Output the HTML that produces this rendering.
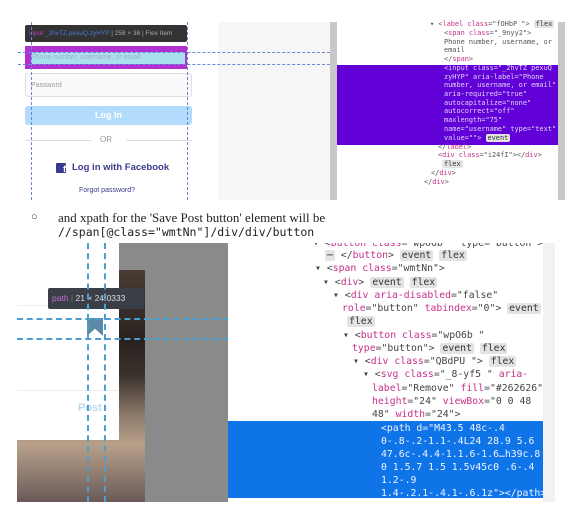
<html><head><style>
body{margin:0;width:576px;height:506px;background:#fff;position:relative;overflow:hidden;font-family:"Liberation Sans",sans-serif}
.a{position:absolute}
.m{font-family:"DejaVu Sans Mono","Liberation Mono",monospace;white-space:pre}
.t div{position:absolute;font-size:6.9px;line-height:8.7px;color:#555;white-space:pre}
.b div{position:absolute;font-size:9.8px;line-height:13.2px;color:#444;white-space:pre}
.tg{color:#c8308c}
.pill{background:#e3e3e3;border-radius:2px;padding:0 2px;color:#333}
.dh{border-top:1px dashed #6a86d8;height:0}
.dv{border-left:1px dashed #6a86d8;width:0}
.bh{border-top:2px dashed #4a9fd0;height:0}
.bv{border-left:2px dashed #4a9fd0;width:0}
.t div.w{color:#e0d4fa}.b div.wb{color:#eef4ff}
</style></head><body>
<!-- top screenshot -->
<div class="a" style="left:218px;top:22px;width:112px;height:178px;background:#f6f6f6"></div>
<div class="a" style="left:330px;top:22px;width:7px;height:178px;background:#c8c8c8"></div>
<div class="a" style="left:558px;top:22px;width:7px;height:178px;background:#c8c8c8"></div>
<div class="a" style="left:25px;top:25px;width:162px;height:17px;background:#333;border-radius:2px;font-size:6.5px;line-height:17px;color:#aaa;padding-left:4px;box-sizing:border-box"><span style="color:#c040c0">input</span><span style="color:#4a7ad8">._2hvTZ.pexuQ.zyHYP</span> | 258 × 36 | Flex Item</div>
<div class="a" style="left:25px;top:46px;width:162px;height:23px;background:#b030d0"></div>
<div class="a" style="left:31px;top:52px;width:154px;height:12px;background:#a8e0ee;font-size:7px;line-height:12px;color:#aac">Phone number, username, or email</div>
<div class="a" style="left:25px;top:73px;width:167px;height:24px;border:1px solid #e0e0e0;background:#fafafa;border-radius:3px;font-size:7px;line-height:24px;color:#999;padding-left:5px;box-sizing:border-box">Password</div>
<div class="a" style="left:25px;top:106px;width:167px;height:19px;background:#b3dbfc;border-radius:3px;font-size:9px;font-weight:bold;color:#fff;text-align:center;line-height:19px">Log In</div>
<div class="a" style="left:25px;top:140px;width:67px;height:1px;background:#ddd"></div>
<div class="a" style="left:126px;top:140px;width:66px;height:1px;background:#ddd"></div>
<div class="a" style="left:100px;top:135px;font-size:8px;color:#999">OR</div>
<div class="a" style="left:56px;top:163px;width:10px;height:10px;background:#3b3a8f;border-radius:1px;color:#fff;font-size:9px;font-weight:bold;line-height:12px;text-align:right;overflow:hidden">f</div>
<div class="a" style="left:72px;top:162px;font-size:9.5px;font-weight:bold;color:#3b3a8f">Log in with Facebook</div>
<div class="a" style="left:79px;top:187px;font-size:7px;color:#3b3a8f">Forgot password?</div>
<div class="a dh" style="left:18px;top:52px;width:312px"></div>
<div class="a dh" style="left:18px;top:64px;width:312px"></div>
<div class="a dv" style="left:31px;top:22px;height:178px"></div>
<div class="a dv" style="left:187px;top:22px;height:178px"></div>
<div class="a" style="left:337px;top:65px;width:221px;height:80px;background:#6200d8"></div>
<div class="a m t" style="left:0;top:0">
<div style="left:430px;top:20px">▾ &lt;<span class="tg">label</span> <span class="tg">class</span>="fOHbP "&gt; <span class="pill">flex</span></div>
<div style="left:444px;top:29px">&lt;<span class="tg">span</span> <span class="tg">class</span>="_9nyy2"&gt;</div>
<div style="left:444px;top:38px">Phone number, username, or</div>
<div style="left:444px;top:46px">email</div>
<div style="left:444px;top:55px">&lt;/<span class="tg">span</span>&gt;</div>
<div class="w" style="left:444px;top:64px">&lt;input class="_2hvTZ pexuQ</div>
<div class="w" style="left:444px;top:73px">zyHYP" aria-label="Phone</div>
<div class="w" style="left:444px;top:81px">number, username, or email"</div>
<div class="w" style="left:444px;top:90px">aria-required="true"</div>
<div class="w" style="left:444px;top:99px">autocapitalize="none"</div>
<div class="w" style="left:444px;top:107px">autocorrect="off"</div>
<div class="w" style="left:444px;top:116px">maxlength="75"</div>
<div class="w" style="left:444px;top:125px">name="username" type="text"</div>
<div class="w" style="left:444px;top:134px">value=""&gt; <span class="pill">event</span></div>
<div style="left:438px;top:143px">&lt;/<span class="tg">label</span>&gt;</div>
<div style="left:438px;top:151px">&lt;<span class="tg">div</span> <span class="tg">class</span>="i24fI"&gt;&lt;/<span class="tg">div</span>&gt;</div>
<div style="left:442px;top:160px"><span class="pill">flex</span></div>
<div style="left:431px;top:169px">&lt;/<span class="tg">div</span>&gt;</div>
<div style="left:424px;top:178px">&lt;/<span class="tg">div</span>&gt;</div>
</div>
<!-- middle text -->
<div class="a" style="left:31px;top:211px;font-size:11px;color:#333">○</div>
<div class="a" style="left:58px;top:210px;font-family:'Liberation Serif',serif;font-size:13px;color:#222">and xpath for the 'Save Post button' element will be</div>
<div class="a m" style="left:58px;top:225px;font-size:11.5px;color:#222">//span[@class="wmtNn"]/div/div/button</div>
<!-- bottom screenshot -->
<div class="a" style="left:119px;top:243px;width:109px;height:259px;background:#8a8a8a"></div>
<div class="a" style="left:17px;top:270px;width:128px;height:232px;background:linear-gradient(#4a3c34,#2a2220 30%,#3a302c 45%,#8a7868 62%,#b8a08a 75%,#6a5a58)"></div>
<div class="a" style="left:17px;top:243px;width:102px;height:197px;background:#fff"></div>
<div class="a" style="left:17px;top:305px;width:102px;height:1px;background:#eee"></div>
<div class="a" style="left:17px;top:390px;width:102px;height:1px;background:#eee"></div>
<div class="a" style="left:78px;top:402px;font-size:11px;color:#b8dcf4;font-weight:bold">Post</div>
<div class="a" style="left:48px;top:288px;width:96px;height:21px;background:#3a3f47;border-radius:2px;font-size:8.5px;line-height:21px;color:#ddd;padding-left:4px;box-sizing:border-box"><span style="color:#c070d0">path</span> <span style="color:#777">|</span> 21 × 24.0333</div>
<div class="a" style="left:87px;top:318px;width:16px;height:18px;background:#5a8aa8;clip-path:polygon(0 0,100% 0,100% 100%,50% 60%,0 100%)"></div>
<div class="a bh" style="left:17px;top:318px;width:211px"></div>
<div class="a bh" style="left:17px;top:338px;width:211px"></div>
<div class="a bv" style="left:87px;top:243px;height:259px"></div>
<div class="a bv" style="left:104px;top:243px;height:259px"></div>
<div class="a" style="left:228px;top:421px;width:315px;height:77px;background:#0f74e8"></div>
<div class="a" style="left:543px;top:243px;width:12px;height:259px;background:#f2f2f2"></div>
<div class="a" style="left:300px;top:243px;width:243px;height:259px;overflow:hidden">
<div class="a m b" style="left:-300px;top:-243px">
<div style="left:313px;top:237px">▾ &lt;<span class="tg">button</span> <span class="tg">class</span>="wpO6b " type="button"&gt;</div>
<div style="left:325px;top:249px"><span class="pill">⋯</span> &lt;/<span class="tg">button</span>&gt; <span class="pill">event</span> <span class="pill">flex</span></div>
<div style="left:315px;top:262px">▾ &lt;<span class="tg">span</span> <span class="tg">class</span>="wmtNn"&gt;</div>
<div style="left:323px;top:276px">▾ &lt;<span class="tg">div</span>&gt; <span class="pill">event</span> <span class="pill">flex</span></div>
<div style="left:333px;top:289px">▾ &lt;<span class="tg">div</span> <span class="tg">aria-disabled</span>="false"</div>
<div style="left:342px;top:302px"><span class="tg">role</span>="button" <span class="tg">tabindex</span>="0"&gt; <span class="pill">event</span></div>
<div style="left:347px;top:315px"><span class="pill">flex</span></div>
<div style="left:343px;top:329px">▾ &lt;<span class="tg">button</span> <span class="tg">class</span>="wpO6b "</div>
<div style="left:352px;top:342px"><span class="tg">type</span>="button"&gt; <span class="pill">event</span> <span class="pill">flex</span></div>
<div style="left:353px;top:355px">▾ &lt;<span class="tg">div</span> <span class="tg">class</span>="QBdPU "&gt; <span class="pill">flex</span></div>
<div style="left:363px;top:368px">▾ &lt;<span class="tg">svg</span> <span class="tg">class</span>="_8-yf5 " <span class="tg">aria-</span></div>
<div style="left:372px;top:382px"><span class="tg">label</span>="Remove" <span class="tg">fill</span>="#262626"</div>
<div style="left:372px;top:395px"><span class="tg">height</span>="24" <span class="tg">viewBox</span>="0 0 48</div>
<div style="left:372px;top:408px">48" <span class="tg">width</span>="24"&gt;</div>
<div class="wb" style="left:381px;top:422px">&lt;path d="M43.5 48c-.4</div>
<div class="wb" style="left:381px;top:435px">0-.8-.2-1.1-.4L24 28.9 5.6</div>
<div class="wb" style="left:381px;top:448px">47.6c-.4.4-1.1.6-1.6…h39c.8</div>
<div class="wb" style="left:381px;top:461px">0 1.5.7 1.5 1.5v45c0 .6-.4</div>
<div class="wb" style="left:381px;top:474px">1.2-.9</div>
<div class="wb" style="left:381px;top:487px">1.4-.2.1-.4.1-.6.1z"&gt;&lt;/path&gt;</div>
</div></div>
</body></html>
